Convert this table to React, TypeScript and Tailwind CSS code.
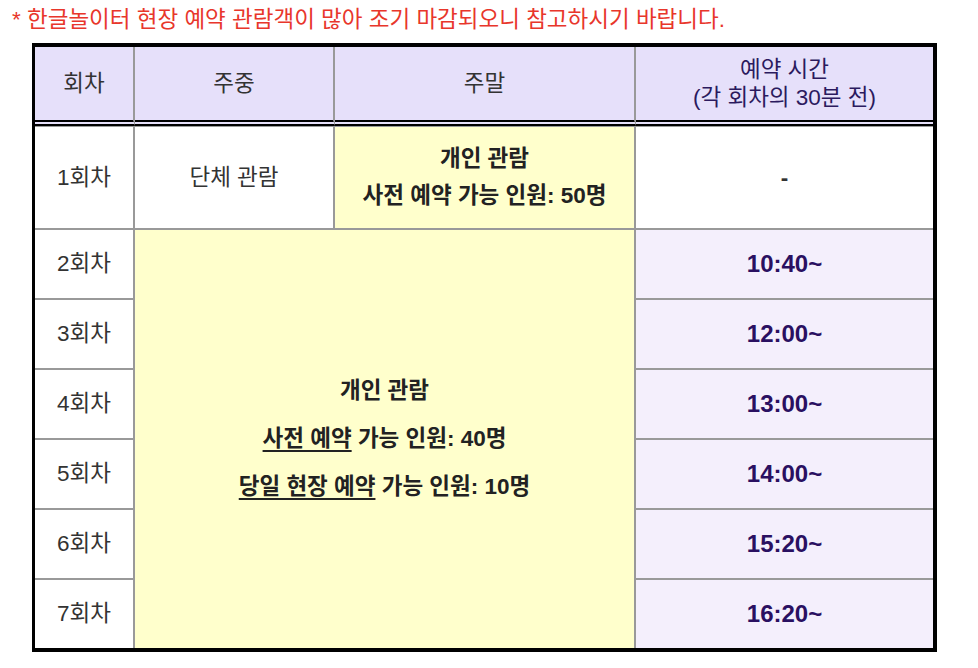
import React from "react";

const font = { fontFamily: '"Liberation Sans", "Noto Sans CJK KR", sans-serif' };

const times = ["10:40~", "12:00~", "13:00~", "14:00~", "15:20~", "16:20~"];

export default function App() {
  return (
    <div className="bg-white w-[978px] h-[668px]" style={font}>
      <div className="pl-3 pt-[6px] text-[22.5px] leading-[28px] text-[#e8362b]">
        * 한글놀이터 현장 예약 관람객이 많아 조기 마감되오니 참고하시기 바랍니다.
      </div>
      <div className="ml-[32px] mt-[9px] w-[905px] border-t-4 border-r-4 border-b-4 border-l-[3px] border-black grid grid-cols-[100px_200px_301px_1fr] grid-rows-[79px_104px_70px_70px_70px_70px_70px_68px] text-[22.5px]">
        {/* header */}
        <div className="bg-[#e6e0fa] border-r-2 border-r-[#999] border-b-[6px] border-b-black border-double flex items-center justify-center text-[#333]">회차</div>
        <div className="bg-[#e6e0fa] border-r-2 border-r-[#999] border-b-[6px] border-b-black border-double flex items-center justify-center text-[#333]">주중</div>
        <div className="bg-[#e6e0fa] border-r-2 border-r-[#999] border-b-[6px] border-b-black border-double flex items-center justify-center text-[#333]">주말</div>
        <div className="bg-[#e6e0fa] border-b-[6px] border-b-black border-double flex flex-col items-center justify-center leading-[28px] text-[#2b1a5e]">
          <span>예약 시간</span>
          <span>(각 회차의 30분 전)</span>
        </div>

        {/* row 1 */}
        <div className="border-t border-r-2 border-b-2 border-[#999] flex items-center justify-center text-[#333]">1회차</div>
        <div className="border-t border-r-2 border-b-2 border-[#999] flex items-center justify-center text-[#333]">단체 관람</div>
        <div className="bg-[#ffffcc] border-t border-r-2 border-b-2 border-[#999] flex flex-col items-center justify-center gap-[9px] leading-[28px] font-bold text-[#222]">
          <span>개인 관람</span>
          <span>사전 예약 가능 인원: 50명</span>
        </div>
        <div className="border-t border-b-2 border-[#999] flex items-center justify-center text-[#333] font-bold">-</div>

        {/* big yellow cell */}
        <div className="col-start-2 col-span-2 row-start-3 row-span-6 bg-[#ffffcc] border-r-2 border-[#999] flex flex-col items-center justify-center gap-[20px] leading-[28px] font-bold text-[#222]">
          <span>개인 관람</span>
          <span>
            <span className="underline underline-offset-[4px] decoration-[1.5px]">사전 예약</span> 가능 인원: 40명
          </span>
          <span>
            <span className="underline underline-offset-[4px] decoration-[1.5px]">당일 현장 예약</span> 가능 인원: 10명
          </span>
        </div>

        {times.map((t, i) => (
          <React.Fragment key={t}>
            <div
              className={`col-start-1 border-r-2 border-[#999] flex items-center justify-center text-[#333] ${i < 5 ? "border-b-2" : ""}`}
              style={{ gridRowStart: i + 3 }}
            >
              {i + 2}회차
            </div>
            <div
              className={`col-start-4 bg-[#f4effc] border-[#999] flex items-center justify-center font-bold text-[24px] text-[#2a1061] ${i < 5 ? "border-b-2" : ""}`}
              style={{ gridRowStart: i + 3 }}
            >
              {t}
            </div>
          </React.Fragment>
        ))}
      </div>
    </div>
  );
}
